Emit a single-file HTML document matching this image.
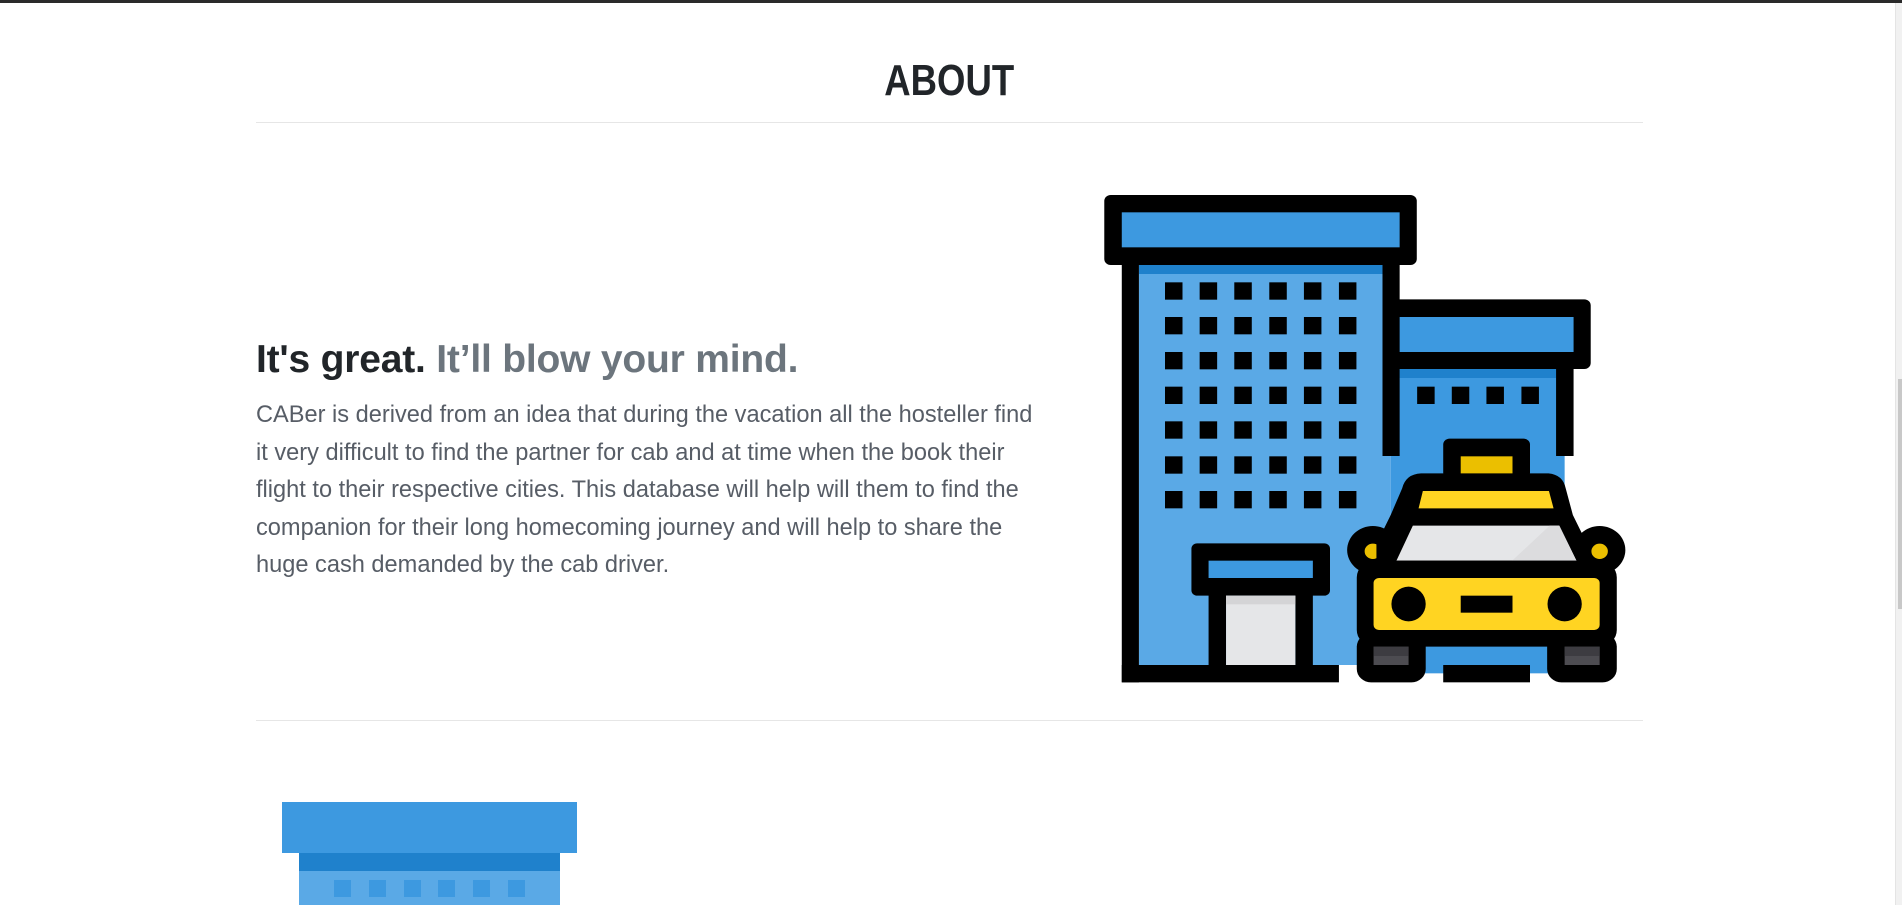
<!DOCTYPE html>
<html><head><meta charset="utf-8"><style>
html,body{margin:0;padding:0;background:#fff;width:1902px;height:905px;overflow:hidden;position:relative;font-family:"Liberation Sans",sans-serif}
.topbar{position:absolute;left:0;top:0;width:1902px;height:3px;background:#2a2a2a}
.scroll{position:absolute;right:0;top:3px;width:6px;height:902px;background:#f1f1f1;border-left:1px solid #e4e4e4}
.thumb{position:absolute;right:0;top:376px;width:4px;height:230px;background:#c8c8c8}
.about{position:absolute;left:0;width:1898px;top:59px;text-align:center;line-height:44px;font-size:44px;font-weight:bold;color:#212529}
.about span{display:inline-block;transform:scaleX(0.83)}
.hr{position:absolute;left:256px;width:1387px;height:1px;background:#e6e6e6}
h2{position:absolute;left:256px;top:341px;margin:0;font-size:39px;line-height:38px;font-weight:bold;color:#212529;white-space:nowrap;letter-spacing:-0.2px}
h2 .m{color:#6c757d}
p{position:absolute;left:256px;top:397px;margin:0;font-size:23.6px;line-height:37.6px;color:#575d66;white-space:nowrap}
</style></head><body>
<div class="topbar"></div>
<div class="about"><span>ABOUT</span></div>
<div class="hr" style="top:122px"></div>
<h2>It's great. <span class="m">It’ll blow your mind.</span></h2>
<p>CABer is derived from an idea that during the vacation all the hosteller find<br>it very difficult to find the partner for cab and at time when the book their<br>flight to their respective cities. This database will help will them to find the<br>companion for their long homecoming journey and will help to share the<br>huge cash demanded by the cab driver.</p>

<svg style="position:absolute;left:1080px;top:180px" width="560" height="520" viewBox="0 0 1568 1560" preserveAspectRatio="none">
<rect x="165" y="255" width="705" height="1200" fill="#5aa9e6"/>
<rect x="165" y="255" width="682" height="27" fill="#1f81cc"/>
<rect x="870" y="567" width="487" height="913" fill="#3d99e0"/>
<rect x="895" y="567" width="438" height="27" fill="#1f81cc"/>
<rect x="68" y="45" width="875" height="210" rx="18" fill="#000"/>
<rect x="117" y="97" width="778" height="105" fill="#3d99e0"/>
<rect x="117" y="240" width="48" height="1267" fill="#000"/>
<rect x="117" y="1455" width="608" height="52" fill="#000"/>
<rect x="847" y="240" width="48" height="588" fill="#000"/>
<g fill="#000">
<g id="row"><rect x="238" y="307" width="49" height="52"/><rect x="335" y="307" width="49" height="52"/><rect x="432" y="307" width="49" height="52"/><rect x="530" y="307" width="49" height="52"/><rect x="627" y="307" width="49" height="52"/><rect x="725" y="307" width="49" height="52"/></g>
<use href="#row" y="104"/><use href="#row" y="209"/><use href="#row" y="313"/><use href="#row" y="417"/><use href="#row" y="522"/><use href="#row" y="626"/>
<rect x="944" y="620" width="49" height="52"/><rect x="1041" y="620" width="49" height="52"/><rect x="1138" y="620" width="49" height="52"/><rect x="1236" y="620" width="49" height="52"/>
</g>
<rect x="847" y="358" width="583" height="209" rx="18" fill="#000"/>
<rect x="895" y="411" width="487" height="105" fill="#3d99e0"/>
<rect x="1333" y="550" width="49" height="278" fill="#000"/>
<rect x="312" y="1090" width="388" height="157" rx="16" fill="#000"/>
<rect x="360" y="1142" width="292" height="52" fill="#3d99e0"/>
<rect x="360" y="1230" width="49" height="240" fill="#000"/>
<rect x="603" y="1230" width="49" height="240" fill="#000"/>
<rect x="409" y="1247" width="194" height="208" fill="#e5e6e8"/>
<rect x="409" y="1247" width="194" height="26" fill="#d4d4d6"/>
<rect x="1017" y="776" width="243" height="120" rx="18" fill="#000"/>
<rect x="1066" y="829" width="145" height="55" fill="#ebbf00"/>
<circle cx="820" cy="1110" r="72" fill="#000"/>
<circle cx="1455" cy="1110" r="72" fill="#000"/>
<circle cx="820" cy="1114" r="23" fill="#ebbf00"/>
<circle cx="1455" cy="1114" r="23" fill="#ebbf00"/>
<path d="M955 880 L1312 880 Q1352 884 1360 925 L1380 1005 L1420 1092 L1420 1190 L830 1190 L830 1092 L870 1005 L902 925 Q912 882 955 880 Z" fill="#000"/>
<polygon points="960,933 1313,933 1326,985 948,985" fill="#ffd422"/>
<polygon points="932,1037 1342,1037 1390,1142 886,1142" fill="#e5e6e8"/>
<polygon points="1315,1037 1342,1037 1390,1142 1210,1142" fill="#dcdcde"/>
<rect x="775" y="1142" width="728" height="258" rx="50" fill="#000"/>
<rect x="822" y="1194" width="633" height="156" rx="15" fill="#ffd422"/>
<ellipse cx="920" cy="1272" rx="48" ry="52" fill="#000"/>
<ellipse cx="1357" cy="1272" rx="48" ry="52" fill="#000"/>
<rect x="1066" y="1247" width="145" height="51" fill="#000"/>
<rect x="775" y="1360" width="193" height="147" rx="40" fill="#000"/>
<rect x="1308" y="1360" width="195" height="147" rx="40" fill="#000"/>
<rect x="822" y="1400" width="98" height="55" fill="#4d4c51"/>
<rect x="1357" y="1400" width="98" height="55" fill="#4d4c51"/>
<rect x="822" y="1400" width="98" height="28" fill="#3d3c41"/>
<rect x="1357" y="1400" width="98" height="28" fill="#3d3c41"/>
<rect x="1017" y="1455" width="243" height="52" fill="#000"/>
</svg>

<div class="hr" style="top:720px"></div>
<div style="position:absolute;left:282px;top:802px;width:295px;height:51px;background:#3d99e0"></div>
<div style="position:absolute;left:299px;top:853px;width:261px;height:18px;background:#1f81cc"></div>
<div style="position:absolute;left:299px;top:871px;width:261px;height:34px;background:#5aa9e6"></div>
<div style="position:absolute;top:880px;left:334px;width:17px;height:17px;background:#3d99e0"></div>
<div style="position:absolute;top:880px;left:369px;width:17px;height:17px;background:#3d99e0"></div>
<div style="position:absolute;top:880px;left:404px;width:17px;height:17px;background:#3d99e0"></div>
<div style="position:absolute;top:880px;left:438px;width:17px;height:17px;background:#3d99e0"></div>
<div style="position:absolute;top:880px;left:473px;width:17px;height:17px;background:#3d99e0"></div>
<div style="position:absolute;top:880px;left:508px;width:17px;height:17px;background:#3d99e0"></div>
<div class="scroll"><div class="thumb"></div></div>
</body></html>
